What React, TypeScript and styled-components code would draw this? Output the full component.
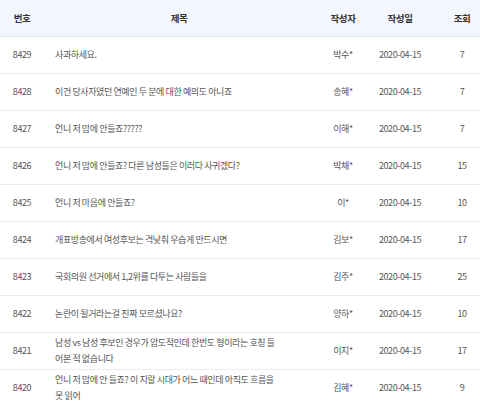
import styled, { createGlobalStyle } from 'styled-components';

const GlobalStyle = createGlobalStyle`
    body {
        margin: 0;
        background: #ffffff;
        font-family: "Noto Sans CJK KR", "Noto Sans", sans-serif;
        overflow: hidden;
    }
`;

const Board = styled.div`
    width: 496px;
    color: #555555;
    font-size: 9px;
    letter-spacing: -0.4px;
`;

const Columns = `
    display: grid;
    grid-template-columns: 44px 270px 58px 56px 68px;
    align-items: center;
`;

const HeadRow = styled.div`
    ${Columns}
    height: 36px;
    background: #f3f7fd;
    border-bottom: 1px solid #e4e8f0;
`;

const HeadCell = styled.div`
    text-align: center;
    font-weight: 700;
    font-size: 9.5px;
    color: #333333;
`;

const Row = styled.div`
    ${Columns}
    height: 36px;
    border-bottom: 1px solid #ebebeb;
`;

const Cell = styled.div<{ $left?: boolean }>`
    text-align: ${(p) => (p.$left ? 'left' : 'center')};
    padding-left: ${(p) => (p.$left ? '11px' : '0')};
    line-height: 16px;
`;

const Line = styled.span`
    display: block;
    white-space: nowrap;
`;

type Post = {
    no: number;
    title: string[];
    writer: string;
    date: string;
    views: number;
};

const posts: Post[] = [
    { no: 8429, title: ['사과하세요.'], writer: '박수*', date: '2020-04-15', views: 7 },
    { no: 8428, title: ['이건 당사자였던 연예인 두 분에 대한 예의도 아니죠'], writer: '송혜*', date: '2020-04-15', views: 7 },
    { no: 8427, title: ['언니 저 맘에 안들죠?????'], writer: '이해*', date: '2020-04-15', views: 7 },
    { no: 8426, title: ['언니 저 맘에 안들죠? 다른 남성들은 이러다 사귀겠다?'], writer: '박채*', date: '2020-04-15', views: 15 },
    { no: 8425, title: ['언니 저 마음에 안들죠?'], writer: '이*', date: '2020-04-15', views: 10 },
    { no: 8424, title: ['개표방송에서 여성후보는 격낮춰 우습게 만드시면'], writer: '김보*', date: '2020-04-15', views: 17 },
    { no: 8423, title: ['국회의원 선거에서 1,2위를 다투는 사람들을'], writer: '김주*', date: '2020-04-15', views: 25 },
    { no: 8422, title: ['논란이 될거라는걸 진짜 모르셨나요?'], writer: '양하*', date: '2020-04-15', views: 10 },
    {
        no: 8421,
        title: ['남성 vs 남성 후보인 경우가 압도적인데 한번도 형이라는 호칭 들', '어본 적 없습니다'],
        writer: '이지*',
        date: '2020-04-15',
        views: 17,
    },
    {
        no: 8420,
        title: ['언니 저 맘에 안 들죠? 이 지랄 시대가 어느 때인데 아직도 흐름을', '못 읽어'],
        writer: '김혜*',
        date: '2020-04-15',
        views: 9,
    },
];

const App = () => {
    return (
        <Board>
            <GlobalStyle />
            <HeadRow>
                <HeadCell>번호</HeadCell>
                <HeadCell>제목</HeadCell>
                <HeadCell>작성자</HeadCell>
                <HeadCell>작성일</HeadCell>
                <HeadCell>조회</HeadCell>
            </HeadRow>
            {posts.map((post) => (
                <Row key={post.no}>
                    <Cell>{post.no}</Cell>
                    <Cell $left>
                        {post.title.map((line) => (
                            <Line key={line}>{line}</Line>
                        ))}
                    </Cell>
                    <Cell>{post.writer}</Cell>
                    <Cell>{post.date}</Cell>
                    <Cell>{post.views}</Cell>
                </Row>
            ))}
        </Board>
    );
};

export default App;
